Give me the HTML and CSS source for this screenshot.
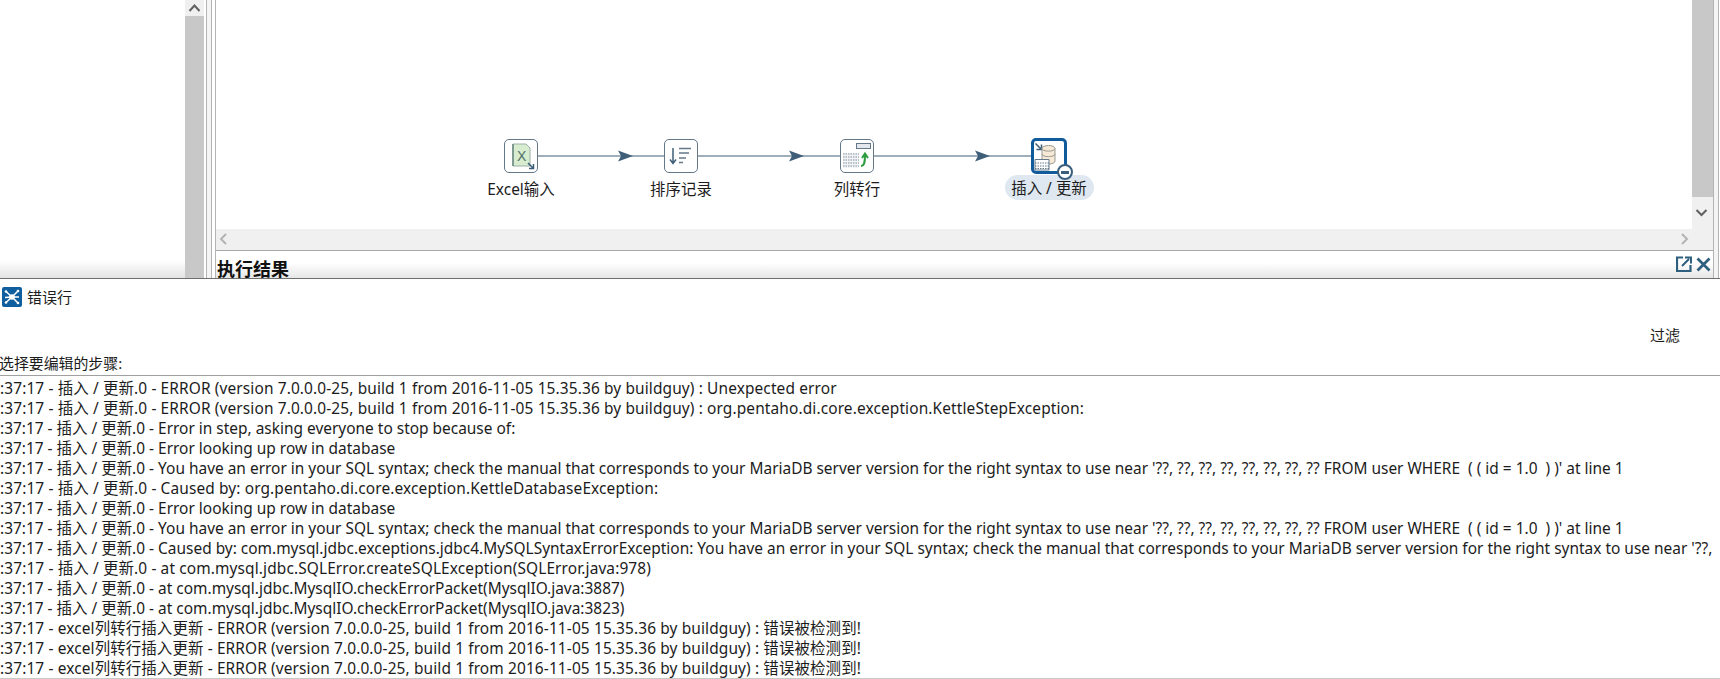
FILE: index.html
```html
<!DOCTYPE html>
<html lang="zh-CN">
<head>
<meta charset="utf-8">
<title>错误行</title>
<link rel="stylesheet" href="styles.css">
</head>
<body>
<section class="top">
  <div class="side"></div>
  <div class="vbar left-bar"><div class="arrow-cell"><svg width="19" height="16" viewBox="0 0 19 16"><path d="M4.5 11 9.5 5.5 14.5 11" class="chev"/></svg></div><div class="thumb"></div></div>
  <div class="rails"></div>
  <div class="work">
    <div class="work-main">
      <div class="canvas">
        <svg class="edges" width="1476" height="229" viewBox="216 0 1476 229">
          <path d="M538 156H1032" class="edge"/>
          <path d="M618 150.500 633 156 618 161.500 621 156Z" class="head"/>
          <path d="M789 150.500 804 156 789 161.500 792 156Z" class="head"/>
          <path d="M975 150.500 990 156 975 161.500 978 156Z" class="head"/>
        </svg>
        <div class="node n1"><div class="box"><svg width="32" height="32" viewBox="0 0 32 32"><path d="M8 4H21L25 8V26H8Z" fill="#d8ecd0" stroke="#9ab0a6"/><path d="M8 4V26" stroke="#7f9a90" stroke-width="2"/><text x="12" y="21" class="xl">X</text><path d="M23 23 28.500 28.500M28.500 24V28.500H24" class="ic"/></svg></div><span class="lbl">Excel输入</span></div>
        <div class="node n2"><div class="box"><svg width="32" height="32" viewBox="0 0 32 32"><path d="M8 8V23M5 19.500 8 23.500 11 19.500" class="ic"/><path d="M14 8.500H26M14 13H24M14 18H21M14 22.500H18" class="ic2"/></svg></div><span class="lbl">排序记录</span></div>
        <div class="node n3"><div class="box"><svg width="32" height="32" viewBox="0 0 32 32"><rect x="15.500" y="3.500" width="14" height="5" fill="#e4e8ec" stroke="#64788a"/><path d="M2 13H18V28H2Z" fill="#f2f4f6"/><path d="M2 14H18M2 17H18M2 20H18M2 23H18M2 26H18" stroke="#7f8f9e" stroke-dasharray="1.500 1"/><path d="M20 26C24 26 24 20 24 15M21 18 24 13.500 27 18" fill="none" stroke="#2e9e3e" stroke-width="2"/></svg></div><span class="lbl">列转行</span></div>
        <div class="node n4"><div class="box active"><svg width="30" height="30" viewBox="0 0 30 30"><path d="M1.500 2.500 7.500 8.500M7.500 3.500V8.500H2.500" class="ic"/><path d="M8 7.500C8 3.500 21 3.500 21 7.500V20C21 24 8 24 8 20Z" fill="#f6ead6" stroke="#9a9a94"/><path d="M8 7.500C8 11 21 11 21 7.500M8 13C8 16.500 21 16.500 21 13" fill="none" stroke="#9a9a94"/><path d="M1 18.500H15V29H1Z" fill="#fff" stroke="#64788a"/><path d="M1 22H15M1 25H15M1 27.500H15" stroke="#64788a" stroke-dasharray="1.500 1"/></svg></div><span class="minus"></span><span class="lbl pill">插入 / 更新</span></div>
      </div>
      <div class="vbar right-bar"><div class="thumb"></div><div class="arrow-cell"><svg width="19" height="32" viewBox="0 0 19 32"><path d="M4.500 13 9.500 18 14.500 13" class="chev"/></svg></div></div>
    </div>
    <div class="hbar"><svg width="16" height="20" viewBox="0 0 16 20"><path d="M10 5 5 10 10 15" class="chev light"/></svg><svg width="16" height="20" viewBox="0 0 16 20"><path d="M6 5 11 10 6 15" class="chev light"/></svg></div>
    <div class="result-head">
      <strong>执行结果</strong>
      <div class="tools">
        <svg width="16" height="16" viewBox="0 0 16 16"><path d="M7 1.500H1V15H14.500V9" fill="none" stroke="#2f5f7f" stroke-width="2.200"/><path d="M6 10 13 3M9 1.500H15V7.500" fill="none" stroke="#2f5f7f" stroke-width="2"/></svg>
        <svg width="15" height="15" viewBox="0 0 15 15"><path d="M1.500 1.500 13.500 13.500M13.500 1.500 1.500 13.500" stroke="#2f5f7f" stroke-width="2.800"/></svg>
      </div>
    </div>
  </div>
  <div class="rails right"></div>
</section>
<section class="dialog">
  <header class="title">
    <svg class="app" width="20" height="20" viewBox="0 0 20 20"><rect width="20" height="20" rx="2" fill="#0f5f9e"/><path d="M10 10 4 4.500M10 10 16 4M10 10 3 10.500M10 10 17 10M10 10 4 15.500M10 10 16 16" stroke="#fff" stroke-width="1.500"/><circle cx="10" cy="10" r="2.800" fill="#fff"/><circle cx="4" cy="4.500" r="1.300" fill="#fff"/><circle cx="16" cy="4" r="1.300" fill="#fff"/><circle cx="4" cy="15.500" r="1.300" fill="#fff"/><circle cx="16" cy="16" r="1.300" fill="#fff"/></svg>
    <span>错误行</span>
  </header>
  <div class="filter">过滤</div>
  <div class="prompt">选择要编辑的步骤:</div>
  <div class="log">
    <div class="wide">:37:17 - 插入 / 更新.0 - ERROR (version 7.0.0.0-25, build 1 from 2016-11-05 15.35.36 by buildguy) : Unexpected error</div>
    <div class="wide">:37:17 - 插入 / 更新.0 - ERROR (version 7.0.0.0-25, build 1 from 2016-11-05 15.35.36 by buildguy) : org.pentaho.di.core.exception.KettleStepException:</div>
    <div>:37:17 - 插入 / 更新.0 - Error in step, asking everyone to stop because of:</div>
    <div>:37:17 - 插入 / 更新.0 - Error looking up row in database</div>
    <div>:37:17 - 插入 / 更新.0 - You have an error in your SQL syntax; check the manual that corresponds to your MariaDB server version for the right syntax to use near '??, ??, ??, ??, ??, ??, ??, ?? FROM user WHERE&nbsp; ( ( id = 1.0&nbsp; ) )' at line 1</div>
    <div class="wide">:37:17 - 插入 / 更新.0 - Caused by: org.pentaho.di.core.exception.KettleDatabaseException:</div>
    <div>:37:17 - 插入 / 更新.0 - Error looking up row in database</div>
    <div>:37:17 - 插入 / 更新.0 - You have an error in your SQL syntax; check the manual that corresponds to your MariaDB server version for the right syntax to use near '??, ??, ??, ??, ??, ??, ??, ?? FROM user WHERE&nbsp; ( ( id = 1.0&nbsp; ) )' at line 1</div>
    <div>:37:17 - 插入 / 更新.0 - Caused by: com.mysql.jdbc.exceptions.jdbc4.MySQLSyntaxErrorException: You have an error in your SQL syntax; check the manual that corresponds to your MariaDB server version for the right syntax to use near '??,</div>
    <div class="wide">:37:17 - 插入 / 更新.0 - at com.mysql.jdbc.SQLError.createSQLException(SQLError.java:978)</div>
    <div>:37:17 - 插入 / 更新.0 - at com.mysql.jdbc.MysqlIO.checkErrorPacket(MysqlIO.java:3887)</div>
    <div>:37:17 - 插入 / 更新.0 - at com.mysql.jdbc.MysqlIO.checkErrorPacket(MysqlIO.java:3823)</div>
    <div class="wide">:37:17 - excel列转行插入更新 - ERROR (version 7.0.0.0-25, build 1 from 2016-11-05 15.35.36 by buildguy) : 错误被检测到!</div>
    <div class="wide">:37:17 - excel列转行插入更新 - ERROR (version 7.0.0.0-25, build 1 from 2016-11-05 15.35.36 by buildguy) : 错误被检测到!</div>
    <div class="wide">:37:17 - excel列转行插入更新 - ERROR (version 7.0.0.0-25, build 1 from 2016-11-05 15.35.36 by buildguy) : 错误被检测到!</div>
  </div>
</section>
</body>
</html>
```
FILE: styles.css
```css
* { box-sizing: border-box; }
html, body { margin: 0; height: 679px; overflow: hidden; background: #fff; }
body { font-family: "Noto Sans", "Noto Sans CJK SC", sans-serif; font-size: 15.45px; color: #1c1c1c; display: flex; flex-direction: column; }

.top { height: 278px; display: flex; background: #fff; flex: none; }
.side { width: 185px; background: linear-gradient(#fff 260px, #e4e4e4 278px); }
.vbar { width: 19px; background: #f0f0f0; display: flex; flex-direction: column; }
.left-bar .arrow-cell { height: 16px; }
.thumb { flex: 1; background: #c8c8c8; }
.arrow-cell svg { display: block; }
.chev { fill: none; stroke: #606060; stroke-width: 2; }
.chev.light { stroke: #b4b4b4; }
.rails { width: 12px; background: linear-gradient(90deg, #fff 2px, #b4b4b4 2px, #b4b4b4 3px, #f4f4f4 3px, #f4f4f4 7px, #b4b4b4 7px, #b4b4b4 8px, #fff 8px, #fff 11px, #b4b4b4 11px); }
.rails.right { width: 7px; background: linear-gradient(90deg, #b4b4b4 1px, #f4f4f4 1px, #f4f4f4 5px, #b4b4b4 5px, #b4b4b4 6px, #fff 6px); }
.work { width: 1497px; display: flex; flex-direction: column; min-height: 0; }
.work-main { height: 229px; display: flex; flex: none; }
.canvas { position: relative; width: 1476px; background: #fff; }
.edges { position: absolute; left: 0; top: 0; }
.edge { stroke: #3f5f78; stroke-width: 1.200; fill: none; }
.head { fill: #3f5f78; }
.right-bar { width: 21px; }
.right-bar .thumb { flex: none; height: 197px; }
.right-bar .arrow-cell { height: 32px; }

.node { position: absolute; top: 139px; width: 120px; display: flex; flex-direction: column; align-items: center; }
.n1 { left: 245px; }
.n2 { left: 405px; }
.n3 { left: 581px; }
.n4 { left: 773px; }
.box { width: 34px; height: 34px; background: #fff; border: 1px solid #64788a; border-radius: 5px; }
.box svg { display: block; }
.box.active { width: 36px; height: 36px; margin-top: -1px; border: 3px solid #0f5b9c; }
.lbl { margin-top: 5px; line-height: 22px; white-space: nowrap; }
.n4 .lbl { margin-top: 1px; }
.pill { background: #dfe8f0; border-radius: 13px; width: 89px; height: 25px; padding-top: 1px; text-align: center; line-height: 24px; }
.minus { position: absolute; left: 68px; top: 25px; width: 16px; height: 16px; border: 2px solid #3a5f7d; border-radius: 50%; background: #fff; display: flex; align-items: center; justify-content: center; }
.minus::before { content: ""; width: 8px; height: 3px; background: #3a5f7d; }
.xl { font-size: 14px; fill: #4f6f68; font-family: "Liberation Sans", sans-serif; }
.ic { fill: none; stroke: #3f5f78; stroke-width: 1.500; }
.ic2 { fill: none; stroke: #64788a; stroke-width: 1.300; }

.hbar { height: 22px; flex: none; background: #f0f0f0; border-bottom: 1px solid #a8a8a8; display: flex; justify-content: space-between; padding: 0 21px 0 0; }
.result-head { height: 27px; flex: none; overflow: hidden; display: flex; justify-content: space-between; align-items: flex-start; background: linear-gradient(#fff 12px, #e6e6e6); }
.result-head strong { font-size: 18px; line-height: 26px; margin: 5px 0 0 1px; color: #111; }
.tools { display: flex; gap: 4px; margin: 5px 2px 0 0; align-items: center; }

.dialog { flex: 1; border-top: 1px solid #6e6e6e; display: flex; flex-direction: column; min-height: 0; }
.title { height: 38px; flex: none; padding: 8px 0 0 2px; display: flex; align-items: flex-start; gap: 5px; line-height: 20px; font-size: 15px; }
.app { display: block; }
.filter { align-self: flex-end; height: 20px; line-height: 20px; margin: 8px 40px 0 0; flex: none; font-size: 15px; }
.prompt { height: 22px; flex: none; line-height: 20px; margin-top: 8px; white-space: nowrap; margin-left: -1px; font-size: 14.9px; }
.log { border-bottom: 1px solid #c8c8c8; border-top: 1px solid #a0a0a0; padding-top: 2px; overflow: hidden; flex: 1; min-height: 0; }
.log div { height: 20px; line-height: 20px; white-space: nowrap; }
.log .wide { letter-spacing: .12px; }
```
